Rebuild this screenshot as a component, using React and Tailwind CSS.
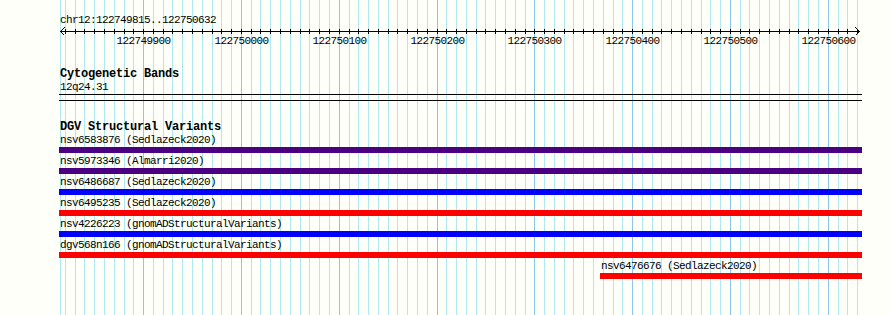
import React from 'react'

// region shown in the panel
const START = 122749815
const END = 122750632
const LEFT = 60
const SPAN = 800

const toX = (bp) => LEFT + Math.round((bp - START) * SPAN / (END - START + 1))

const gridPositions = []
for (let bp = 122749820; bp <= END; bp += 10) gridPositions.push(bp)

const majorLabels = [122749900, 122750000, 122750100, 122750200, 122750300, 122750400, 122750500, 122750600]

const variants = [
    { name: 'nsv6583876 (Sedlazeck2020)', color: 'bg-[#4b0082]', offset: 'ml-[59px] w-[803px]' },
    { name: 'nsv5973346 (Almarri2020)', color: 'bg-[#4b0082]', offset: 'ml-[59px] w-[803px]' },
    { name: 'nsv6486687 (Sedlazeck2020)', color: 'bg-[#0000ff]', offset: 'ml-[59px] w-[803px]' },
    { name: 'nsv6495235 (Sedlazeck2020)', color: 'bg-[#ff0000]', offset: 'ml-[59px] w-[803px]' },
    { name: 'nsv4226223 (gnomADStructuralVariants)', color: 'bg-[#0000ff]', offset: 'ml-[59px] w-[803px]' },
    { name: 'dgv568n166 (gnomADStructuralVariants)', color: 'bg-[#ff0000]', offset: 'ml-[59px] w-[803px]' },
    { name: 'nsv6476676 (Sedlazeck2020)', color: 'bg-[#ff0000]', offset: 'ml-[600px] w-[262px]' },
]

const GridLines = () => (
    <svg className="absolute inset-0" width="890" height="315" shapeRendering="crispEdges">
        <rect x="60" y="0" width="1" height="315" fill="#b0e8f0" />
        {gridPositions.map((bp) => (
            <rect
                key={bp}
                x={toX(bp)}
                y="0"
                width="1"
                height="315"
                fill={bp % 100 === 0 ? '#88c8ec' : '#b0e8f0'}
            />
        ))}
    </svg>
)

const Ruler = () => (
    <div className="relative h-[22px]">
        <svg width="890" height="10" shapeRendering="crispEdges" className="block">
            <rect x="60" y="4" width="800" height="1" fill="#000" />
            {gridPositions.map((bp) => (
                <rect key={bp} x={toX(bp)} y="2" width="1" height="5" fill="#000" />
            ))}
            <path d="M64.5 0.5 L60.5 4.5 L64.5 8.5" fill="none" stroke="#000" strokeWidth="1" />
            <path d="M855.5 0.5 L859.5 4.5 L855.5 8.5" fill="none" stroke="#000" strokeWidth="1" />
        </svg>
        {majorLabels.map((bp) => (
            <span
                key={bp}
                className="absolute top-[8px] -translate-x-1/2 leading-[13px]"
                style={{ left: toX(bp) + 0.5 }}
            >
                {bp}
            </span>
        ))}
    </div>
)

export default function App() {
    return (
        <div className="relative w-[890px] h-[315px] overflow-hidden bg-[#fdfff8] text-black font-['Liberation_Mono',monospace] text-[11px] tracking-[-0.6px]">
            <GridLines />
            <div className="relative">
                <div className="pt-[14px] pl-[60px] leading-[13px]">chr12:122749815..122750632</div>
                <Ruler />

                <div className="mt-[19px] pl-[60px] leading-[13px] font-bold text-[12px] tracking-[-0.2px]">Cytogenetic Bands</div>
                <div className="pl-[60px] leading-[13px]">12q24.31</div>
                <div className="ml-[59px] w-[803px] h-[7px] border-y border-black"></div>

                <div className="mt-[20px] pl-[60px] leading-[13px] font-bold text-[12px] tracking-[-0.2px]">DGV Structural Variants</div>
                <div className="flex flex-col gap-[2px]">
                    {variants.map((v) => (
                        <div key={v.name} className={v.offset}>
                            <div className="pl-px leading-[13px] whitespace-nowrap">{v.name}</div>
                            <div className={`h-[6px] ${v.color}`}></div>
                        </div>
                    ))}
                </div>
            </div>
        </div>
    )
}
